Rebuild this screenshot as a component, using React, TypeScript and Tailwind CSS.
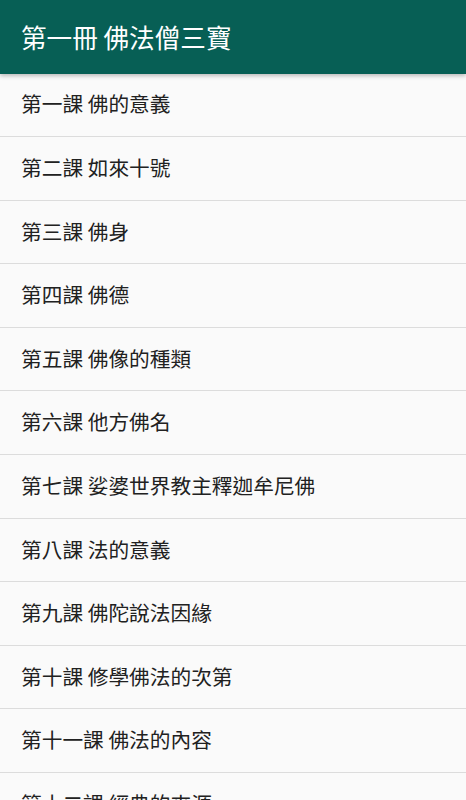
const lessons = [
  "第一課 佛的意義",
  "第二課 如來十號",
  "第三課 佛身",
  "第四課 佛德",
  "第五課 佛像的種類",
  "第六課 他方佛名",
  "第七課 娑婆世界教主釋迦牟尼佛",
  "第八課 法的意義",
  "第九課 佛陀說法因緣",
  "第十課 修學佛法的次第",
  "第十一課 佛法的內容",
  "第十二課 經典的來源",
  "第十三課 三藏十二部",
];

export default function App() {
  return (
    <div
      className="w-[466px] h-[800px] overflow-hidden bg-[#fafafa]"
      style={{ fontFamily: '"Noto Sans CJK TC", "Noto Sans", sans-serif' }}
    >
      <header className="relative z-10 h-[73.5px] bg-[#075f55] flex items-center px-[21px] shadow-[0_2px_4px_rgba(0,0,0,0.25)]">
        <h1 className="text-[25.6px] text-white font-normal leading-none">第一冊 佛法僧三寶</h1>
      </header>
      <ul>
        {lessons.map((lesson) => (
          <li
            key={lesson}
            className="h-[63.6px] box-border border-b border-[#dcdcdc] flex items-center px-[21px] pb-[2px] text-[20.7px] text-[#212121] leading-none"
          >
            {lesson}
          </li>
        ))}
      </ul>
    </div>
  );
}
